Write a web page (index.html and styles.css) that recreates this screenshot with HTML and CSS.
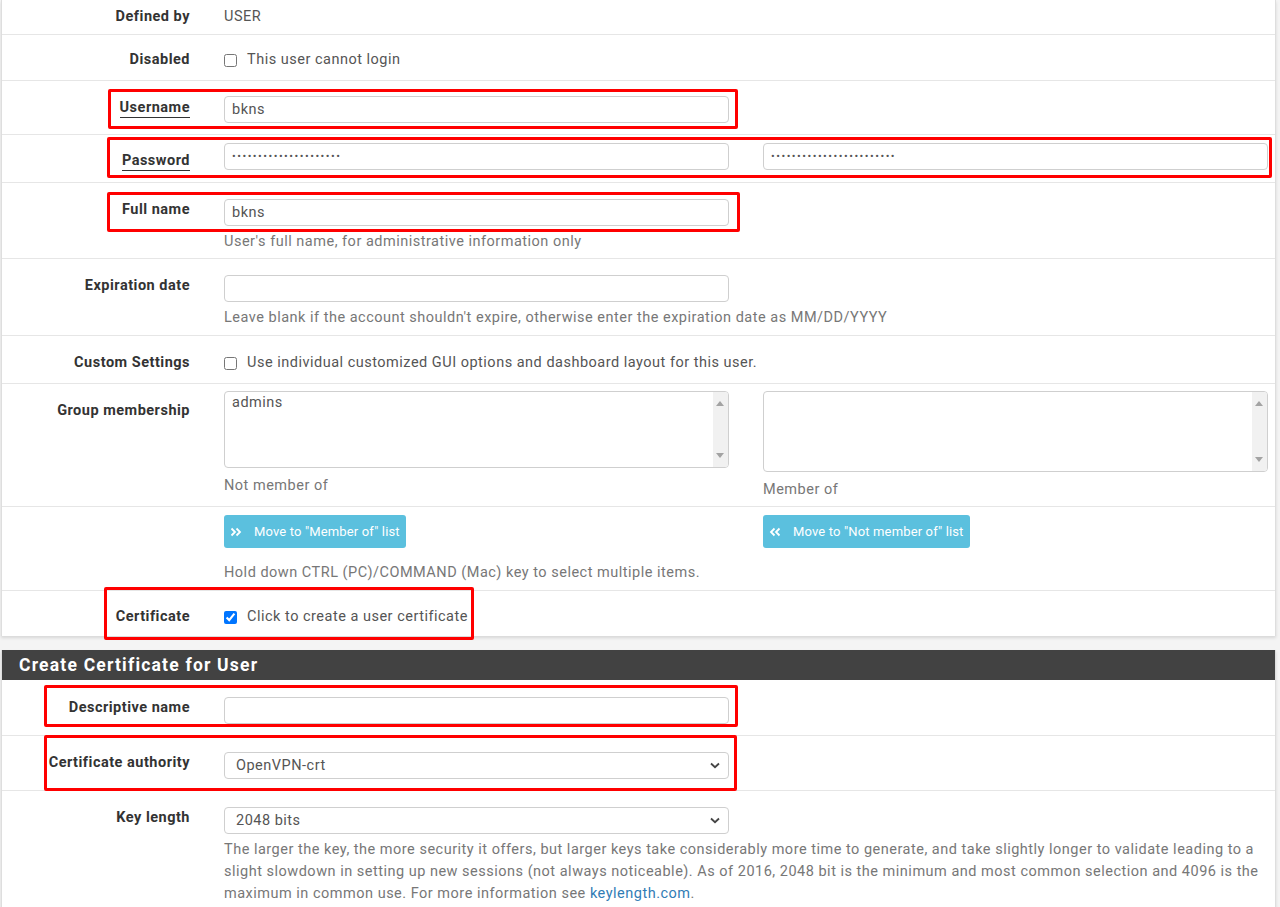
FILE: index.html
```html
<!DOCTYPE html>
<html lang="en">
<head>
    <meta charset="UTF-8">
    <meta name="viewport" content="width=device-width, initial-scale=1.0">
    <title>User Manager - Edit User</title>
    <link rel="stylesheet" href="styles.css">
</head>
<body>
    <div class="page">
        <div class="panel">
            <div class="row row-first">
                <div class="row-label">Defined by</div>
                <div class="row-body">USER</div>
            </div>
            <div class="row row-check row-disabled">
                <div class="row-label">Disabled</div>
                <div class="row-body">
                    <label class="check"><input type="checkbox"> This user cannot login</label>
                </div>
            </div>
            <div class="row row-username">
                <div class="row-label"><span class="required">Username</span></div>
                <div class="row-body">
                    <input class="field" type="text" value="bkns">
                </div>
            </div>
            <div class="row row-password">
                <div class="row-label"><span class="required">Password</span></div>
                <div class="row-body cols">
                    <div class="col"><input class="field" type="password" value="passwordpassword12345"></div>
                    <div class="col"><input class="field" type="password" value="passwordpassword12345678"></div>
                </div>
            </div>
            <div class="row row-help">
                <div class="row-label">Full name</div>
                <div class="row-body">
                    <input class="field" type="text" value="bkns">
                    <div class="help">User's full name, for administrative information only</div>
                </div>
            </div>
            <div class="row row-help row-exp">
                <div class="row-label">Expiration date</div>
                <div class="row-body">
                    <input class="field" type="text">
                    <div class="help">Leave blank if the account shouldn't expire, otherwise enter the expiration date as MM/DD/YYYY</div>
                </div>
            </div>
            <div class="row row-check row-custom">
                <div class="row-label">Custom Settings</div>
                <div class="row-body">
                    <label class="check"><input type="checkbox"> Use individual customized GUI options and dashboard layout for this user.</label>
                </div>
            </div>
            <div class="row row-groups">
                <div class="row-label">Group membership</div>
                <div class="row-body cols">
                    <div class="col">
                        <div class="listbox">
                            <div class="list-items"><div class="list-item">admins</div></div>
                            <div class="scrollbar">
                                <span class="arrow-up"></span>
                                <span class="arrow-down"></span>
                            </div>
                        </div>
                        <div class="help">Not member of</div>
                    </div>
                    <div class="col">
                        <div class="listbox listbox-tall">
                            <div class="list-items"></div>
                            <div class="scrollbar">
                                <span class="arrow-up"></span>
                                <span class="arrow-down"></span>
                            </div>
                        </div>
                        <div class="help">Member of</div>
                    </div>
                </div>
            </div>
            <div class="row row-buttons">
                <div class="row-label"></div>
                <div class="row-body">
                    <div class="cols">
                        <div class="col">
                            <button class="btn-info" type="button">
                                <svg width="12" height="12" viewBox="0 0 12 12"><path d="M1.5 2.5 L5 6 L1.5 9.5 M6.5 2.5 L10 6 L6.5 9.5" fill="none" stroke="#fff" stroke-width="1.8"/></svg>
                                Move to "Member of" list
                            </button>
                        </div>
                        <div class="col">
                            <button class="btn-info" type="button">
                                <svg width="12" height="12" viewBox="0 0 12 12"><path d="M5.5 2.5 L2 6 L5.5 9.5 M10.5 2.5 L7 6 L10.5 9.5" fill="none" stroke="#fff" stroke-width="1.8"/></svg>
                                Move to "Not member of" list
                            </button>
                        </div>
                    </div>
                    <div class="help help-buttons">Hold down CTRL (PC)/COMMAND (Mac) key to select multiple items.</div>
                </div>
            </div>
            <div class="row row-check row-cert">
                <div class="row-label">Certificate</div>
                <div class="row-body">
                    <label class="check"><input type="checkbox" checked> Click to create a user certificate</label>
                </div>
            </div>
        </div>

        <div class="panel panel-cert">
            <h2 class="panel-heading">Create Certificate for User</h2>
            <div class="row row-nosep">
                <div class="row-label">Descriptive name</div>
                <div class="row-body">
                    <input class="field" type="text">
                </div>
            </div>
            <div class="row">
                <div class="row-label">Certificate authority</div>
                <div class="row-body">
                    <div class="select-wrap">
                        <select class="field select">
                            <option>OpenVPN-crt</option>
                        </select>
                        <svg class="chevron" width="10" height="7" viewBox="0 0 10 7"><path d="M1 1.5 L5 5.2 L9 1.5" fill="none" stroke="#444" stroke-width="1.8"/></svg>
                    </div>
                </div>
            </div>
            <div class="row row-help">
                <div class="row-label">Key length</div>
                <div class="row-body">
                    <div class="select-wrap">
                        <select class="field select">
                            <option>2048 bits</option>
                        </select>
                        <svg class="chevron" width="10" height="7" viewBox="0 0 10 7"><path d="M1 1.5 L5 5.2 L9 1.5" fill="none" stroke="#444" stroke-width="1.8"/></svg>
                    </div>
                    <div class="help">The larger the key, the more security it offers, but larger keys take considerably more time to generate, and take slightly longer to validate leading to a slight slowdown in setting up new sessions (not always noticeable). As of 2016, 2048 bit is the minimum and most common selection and 4096 is the maximum in common use. For more information see <a href="#">keylength.com</a>.</div>
                </div>
            </div>
        </div>

        <!-- annotation boxes drawn over the screenshot -->
        <div class="mark" style="left:108px; top:89px; width:630px; height:40px;"></div>
        <div class="mark" style="left:107px; top:137px; width:1165px; height:41px;"></div>
        <div class="mark" style="left:107px; top:192px; width:633px; height:40px;"></div>
        <div class="mark" style="left:104px; top:587px; width:370px; height:53px;"></div>
        <div class="mark" style="left:44px; top:685px; width:694px; height:42px;"></div>
        <div class="mark" style="left:44px; top:735px; width:693px; height:56px;"></div>
    </div>
</body>
</html>
```

FILE: styles.css
```css
* {
    margin: 0;
    padding: 0;
    box-sizing: border-box;
}

body {
    font-family: Roboto, "Liberation Sans", Arial, sans-serif;
    font-size: 14.5px;
    letter-spacing: 0.5px;
    line-height: 20px;
    color: #333;
    background: #f4f4f4;
    overflow: hidden;
}

.page {
    position: relative;
    padding: 0 4px 0 1px;
}

.panel {
    background: #fff;
    border-left: 1px solid #dedede;
    border-right: 1px solid #dedede;
    box-shadow: 0 2px 3px rgba(0, 0, 0, 0.12);
}

.panel-cert {
    margin-top: 14px;
}

.panel-heading {
    background: #424242;
    color: #fff;
    font-size: 17.5px;
    font-weight: bold;
    line-height: 30px;
    height: 30px;
    padding-left: 17px;
    letter-spacing: 1.2px;
}

/* form rows */
.row {
    display: flex;
    border-top: 1px solid #e6e6e6;
    padding: 16px 0 11px;
}

.row-first {
    border-top: none;
    padding: 6px 0 7px;
}

.row-first .row-body {
    padding-top: 1px;
}

.row-nosep {
    border-top: none;
    padding-top: 17px;
}

.row-label {
    flex: none;
    width: 188px;
    padding-top: 1px;
    text-align: right;
    font-weight: bold;
    color: #333;
}

.row-body {
    margin-left: 34px;
    width: 1044px;
    color: #555;
}

.row-check {
    padding: 15px 0 10px;
}

.row-disabled {
    padding-top: 14px;
}

.row-custom {
    padding-top: 16px;
}

.row-cert {
    padding-bottom: 9px;
}

.row-username {
    padding-top: 15px;
}

.row-username .row-label {
    padding-top: 2px;
}

.row-password {
    padding-top: 8px;
}

.row-password .row-label {
    padding-top: 8px;
}

.row-help {
    padding-bottom: 5px;
}

.row-exp {
    padding-bottom: 6px;
}

.row-groups {
    padding: 7px 0 5px;
}

.row-groups .row-label {
    padding-top: 10px;
}

.row-groups .help {
    margin-top: 7px;
}

.row-buttons {
    padding: 8px 0 6px;
}

.required {
    border-bottom: 1px solid #333;
    padding-bottom: 1px;
}

.cols {
    display: flex;
    gap: 34px;
}

.col {
    width: 505px;
}

/* controls */
.field {
    display: block;
    width: 505px;
    height: 27px;
    border: 1px solid #cfcfcf;
    border-radius: 4px;
    padding: 0 7px;
    font-family: inherit;
    font-size: 14.5px;
    letter-spacing: 0.5px;
    color: #555;
    background: #fff;
    outline: none;
}

input[type="password"].field {
    font-size: 11px;
    letter-spacing: 1.5px;
}

.select-wrap {
    position: relative;
    width: 505px;
}

.select {
    appearance: none;
    -webkit-appearance: none;
    padding: 0 11px;
}

.chevron {
    position: absolute;
    right: 9px;
    top: 10px;
}

.check {
    display: flex;
    align-items: center;
    gap: 10px;
    padding-top: 1px;
    color: #555;
}

.check input {
    width: 13px;
    height: 13px;
    margin: 0;
}

.help {
    margin-top: 5px;
    line-height: 22px;
    color: #777;
}

.help a {
    color: #317cb5;
    text-decoration: none;
}

.help-buttons {
    margin-top: 14px;
}

.listbox {
    display: flex;
    height: 77px;
    border: 1px solid #cfcfcf;
    border-radius: 4px;
    overflow: hidden;
}

.listbox-tall {
    height: 81px;
}

.list-items {
    flex: 1;
    padding: 2px 7px 0;
    line-height: 18px;
    color: #555;
}

.scrollbar {
    position: relative;
    width: 15px;
    background: #f1f1f1;
}

.arrow-up,
.arrow-down {
    position: absolute;
    left: 3px;
    width: 0;
    height: 0;
    border-left: 4px solid transparent;
    border-right: 4px solid transparent;
}

.arrow-up {
    top: 9px;
    border-bottom: 5px solid #a3a3a3;
}

.arrow-down {
    bottom: 9px;
    border-top: 5px solid #a3a3a3;
}

.btn-info {
    display: flex;
    align-items: center;
    gap: 12px;
    height: 33px;
    padding: 0 6px;
    border: none;
    border-radius: 3px;
    background: #5bc0de;
    color: #fff;
    font-family: inherit;
    font-size: 13px;
    letter-spacing: 0.15px;
}

/* red annotation frames */
.mark {
    position: absolute;
    border: 3px solid #f00;
    border-radius: 2px;
    pointer-events: none;
}
```
